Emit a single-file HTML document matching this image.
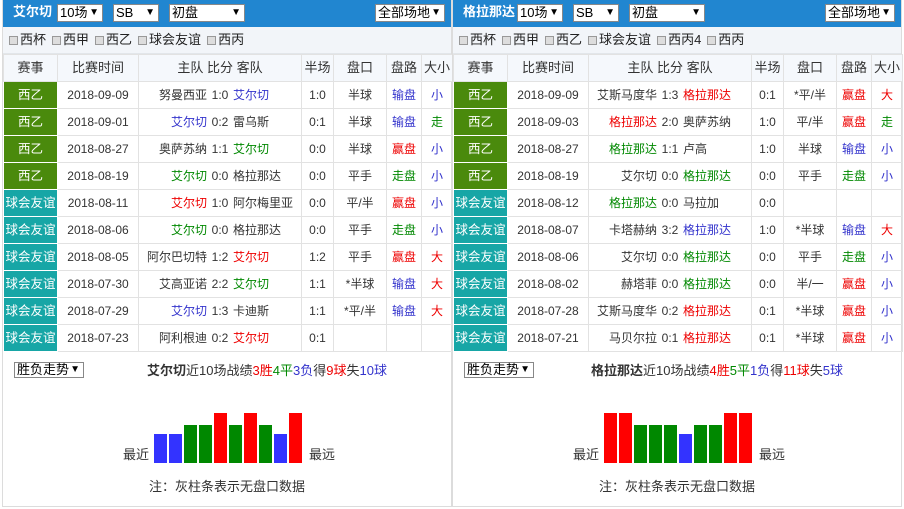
<!DOCTYPE html><html><head><meta charset="utf-8"><style>
*{margin:0;padding:0;box-sizing:border-box}
body{width:904px;height:509px;background:#fff;font-family:"Liberation Sans","Noto Sans CJK SC",sans-serif;font-size:12px;color:#333;position:relative;overflow:hidden}
.p{position:absolute;top:0;width:450px;height:507px;border:1px solid #dcdcdc;border-top:none}
.hd{height:27px;background:#2186d0;position:relative;color:#fff}
.hd b{position:absolute;left:10px;top:3px;font-size:13px;line-height:18px}
.sel{position:absolute;top:4px;height:18px;background:#fff;color:#000;border:1px solid #888;font-size:13px;line-height:16px;padding-left:2px}
.sel i{position:absolute;right:3px;top:0;font-style:normal;font-size:10px}
.ck{height:27px;background:#f2f5f9;line-height:26px;padding-left:6px;font-size:13px;color:#222;border-bottom:1px solid #e2e6ea}
.ck span{margin-right:6px}
.ck em{display:inline-block;width:9px;height:9px;border:1px solid #999;background:#ddd;margin-right:2px;vertical-align:-1px;font-style:normal}
table{border-collapse:collapse;width:449px;table-layout:fixed}
td{height:27px;border:1px solid #e2e2e2;text-align:center;font-size:12px;white-space:nowrap;overflow:hidden;vertical-align:middle;line-height:16px}
tr.h td{background:#f5f8fc;font-size:13px;color:#333}
td.lg{color:#fff;font-size:12.5px;border-color:#fff;padding:0}
.g1{background:#4a8a0c}.g2{background:#17a6a6}
.m span{display:inline-block;vertical-align:middle}
.m .a{width:62px;text-align:right}.m .s{width:26px;text-align:center}.m .b{width:62px;text-align:left}
.r{color:#e00}.g{color:#080}.bl{color:#33c}
.bot{position:relative;height:153px}
.ds{position:absolute;left:11px;top:10px;width:70px;height:16px;border:1px solid #888;font-size:13px;line-height:14px;padding-left:2px;color:#000}
.ds i{position:absolute;right:3px;font-style:normal;font-size:10px}
.sm{position:absolute;top:8px;font-size:13px;width:100%;text-align:center}
.bar{position:absolute;width:13px;bottom:42px}
.lb{position:absolute;top:92px;font-size:13px}
.nt{position:absolute;top:124px;width:100%;text-align:center;font-size:13px}
</style></head><body>

<div class="p" style="left:2px">
<div class="hd"><b>艾尔切</b>
<div class="sel" style="left:54px;width:46px">10场<i>▼</i></div>
<div class="sel" style="left:110px;width:46px">SB<i>▼</i></div>
<div class="sel" style="left:166px;width:76px">初盘<i>▼</i></div>
<div class="sel" style="left:372px;width:70px">全部场地<i>▼</i></div></div>
<div class="ck"><span><em></em>西杯</span><span><em></em>西甲</span><span><em></em>西乙</span><span><em></em>球会友谊</span><span><em></em>西丙</span></div>
<table>
<colgroup><col style="width:54px"><col style="width:81px"><col style="width:163px"><col style="width:32px"><col style="width:53px"><col style="width:35px"><col style="width:31px"></colgroup>
<tr class="h"><td>赛事</td><td>比赛时间</td><td>主队 比分 客队</td><td>半场</td><td>盘口</td><td>盘路</td><td>大小</td></tr>
<tr><td class="lg g1">西乙</td><td>2018-09-09</td><td class="m"><span class="a">努曼西亚</span><span class="s">1:0</span><span class="b bl">艾尔切</span></td><td>1:0</td><td>半球</td><td class="bl">输盘</td><td class="bl">小</td></tr>
<tr><td class="lg g1">西乙</td><td>2018-09-01</td><td class="m"><span class="a bl">艾尔切</span><span class="s">0:2</span><span class="b">雷乌斯</span></td><td>0:1</td><td>半球</td><td class="bl">输盘</td><td class="g">走</td></tr>
<tr><td class="lg g1">西乙</td><td>2018-08-27</td><td class="m"><span class="a">奥萨苏纳</span><span class="s">1:1</span><span class="b g">艾尔切</span></td><td>0:0</td><td>半球</td><td class="r">赢盘</td><td class="bl">小</td></tr>
<tr><td class="lg g1">西乙</td><td>2018-08-19</td><td class="m"><span class="a g">艾尔切</span><span class="s">0:0</span><span class="b">格拉那达</span></td><td>0:0</td><td>平手</td><td class="g">走盘</td><td class="bl">小</td></tr>
<tr><td class="lg g2">球会友谊</td><td>2018-08-11</td><td class="m"><span class="a r">艾尔切</span><span class="s">1:0</span><span class="b">阿尔梅里亚</span></td><td>0:0</td><td>平/半</td><td class="r">赢盘</td><td class="bl">小</td></tr>
<tr><td class="lg g2">球会友谊</td><td>2018-08-06</td><td class="m"><span class="a g">艾尔切</span><span class="s">0:0</span><span class="b">格拉那达</span></td><td>0:0</td><td>平手</td><td class="g">走盘</td><td class="bl">小</td></tr>
<tr><td class="lg g2">球会友谊</td><td>2018-08-05</td><td class="m"><span class="a">阿尔巴切特</span><span class="s">1:2</span><span class="b r">艾尔切</span></td><td>1:2</td><td>平手</td><td class="r">赢盘</td><td class="r">大</td></tr>
<tr><td class="lg g2">球会友谊</td><td>2018-07-30</td><td class="m"><span class="a">艾高亚诺</span><span class="s">2:2</span><span class="b g">艾尔切</span></td><td>1:1</td><td>*半球</td><td class="bl">输盘</td><td class="r">大</td></tr>
<tr><td class="lg g2">球会友谊</td><td>2018-07-29</td><td class="m"><span class="a bl">艾尔切</span><span class="s">1:3</span><span class="b">卡迪斯</span></td><td>1:1</td><td>*平/半</td><td class="bl">输盘</td><td class="r">大</td></tr>
<tr><td class="lg g2">球会友谊</td><td>2018-07-23</td><td class="m"><span class="a">阿利根迪</span><span class="s">0:2</span><span class="b r">艾尔切</span></td><td>0:1</td><td></td><td></td><td></td></tr>
</table>
<div class="bot">
<div class="ds">胜负走势<i>▼</i></div>
<div class="sm" style="left:40px"><b>艾尔切</b>近10场战绩<span class="r">3胜</span><span class="g">4平</span><span class="bl">3负</span>得<span class="r">9球</span>失<span class="bl">10球</span></div>
<div class="lb" style="left:120px">最近</div><div class="lb" style="left:306px">最远</div>
<div class="bar" style="left:151px;height:29px;background:#33f"></div>
<div class="bar" style="left:166px;height:29px;background:#33f"></div>
<div class="bar" style="left:181px;height:38px;background:#080"></div>
<div class="bar" style="left:196px;height:38px;background:#080"></div>
<div class="bar" style="left:211px;height:50px;background:#f00"></div>
<div class="bar" style="left:226px;height:38px;background:#080"></div>
<div class="bar" style="left:241px;height:50px;background:#f00"></div>
<div class="bar" style="left:256px;height:38px;background:#080"></div>
<div class="bar" style="left:271px;height:29px;background:#33f"></div>
<div class="bar" style="left:286px;height:50px;background:#f00"></div>
<div class="nt">注：灰柱条表示无盘口数据</div>
</div></div>

<div class="p" style="left:452px">
<div class="hd"><b>格拉那达</b>
<div class="sel" style="left:64px;width:46px">10场<i>▼</i></div>
<div class="sel" style="left:120px;width:46px">SB<i>▼</i></div>
<div class="sel" style="left:176px;width:76px">初盘<i>▼</i></div>
<div class="sel" style="left:372px;width:70px">全部场地<i>▼</i></div></div>
<div class="ck"><span><em></em>西杯</span><span><em></em>西甲</span><span><em></em>西乙</span><span><em></em>球会友谊</span><span><em></em>西丙4</span><span><em></em>西丙</span></div>
<table>
<colgroup><col style="width:54px"><col style="width:81px"><col style="width:163px"><col style="width:32px"><col style="width:53px"><col style="width:35px"><col style="width:31px"></colgroup>
<tr class="h"><td>赛事</td><td>比赛时间</td><td>主队 比分 客队</td><td>半场</td><td>盘口</td><td>盘路</td><td>大小</td></tr>
<tr><td class="lg g1">西乙</td><td>2018-09-09</td><td class="m"><span class="a">艾斯马度华</span><span class="s">1:3</span><span class="b r">格拉那达</span></td><td>0:1</td><td>*平/半</td><td class="r">赢盘</td><td class="r">大</td></tr>
<tr><td class="lg g1">西乙</td><td>2018-09-03</td><td class="m"><span class="a r">格拉那达</span><span class="s">2:0</span><span class="b">奥萨苏纳</span></td><td>1:0</td><td>平/半</td><td class="r">赢盘</td><td class="g">走</td></tr>
<tr><td class="lg g1">西乙</td><td>2018-08-27</td><td class="m"><span class="a g">格拉那达</span><span class="s">1:1</span><span class="b">卢高</span></td><td>1:0</td><td>半球</td><td class="bl">输盘</td><td class="bl">小</td></tr>
<tr><td class="lg g1">西乙</td><td>2018-08-19</td><td class="m"><span class="a">艾尔切</span><span class="s">0:0</span><span class="b g">格拉那达</span></td><td>0:0</td><td>平手</td><td class="g">走盘</td><td class="bl">小</td></tr>
<tr><td class="lg g2">球会友谊</td><td>2018-08-12</td><td class="m"><span class="a g">格拉那达</span><span class="s">0:0</span><span class="b">马拉加</span></td><td>0:0</td><td></td><td></td><td></td></tr>
<tr><td class="lg g2">球会友谊</td><td>2018-08-07</td><td class="m"><span class="a">卡塔赫纳</span><span class="s">3:2</span><span class="b bl">格拉那达</span></td><td>1:0</td><td>*半球</td><td class="bl">输盘</td><td class="r">大</td></tr>
<tr><td class="lg g2">球会友谊</td><td>2018-08-06</td><td class="m"><span class="a">艾尔切</span><span class="s">0:0</span><span class="b g">格拉那达</span></td><td>0:0</td><td>平手</td><td class="g">走盘</td><td class="bl">小</td></tr>
<tr><td class="lg g2">球会友谊</td><td>2018-08-02</td><td class="m"><span class="a">赫塔菲</span><span class="s">0:0</span><span class="b g">格拉那达</span></td><td>0:0</td><td>半/一</td><td class="r">赢盘</td><td class="bl">小</td></tr>
<tr><td class="lg g2">球会友谊</td><td>2018-07-28</td><td class="m"><span class="a">艾斯马度华</span><span class="s">0:2</span><span class="b r">格拉那达</span></td><td>0:1</td><td>*半球</td><td class="r">赢盘</td><td class="bl">小</td></tr>
<tr><td class="lg g2">球会友谊</td><td>2018-07-21</td><td class="m"><span class="a">马贝尔拉</span><span class="s">0:1</span><span class="b r">格拉那达</span></td><td>0:1</td><td>*半球</td><td class="r">赢盘</td><td class="bl">小</td></tr>
</table>
<div class="bot">
<div class="ds">胜负走势<i>▼</i></div>
<div class="sm" style="left:40px"><b>格拉那达</b>近10场战绩<span class="r">4胜</span><span class="g">5平</span><span class="bl">1负</span>得<span class="r">11球</span>失<span class="bl">5球</span></div>
<div class="lb" style="left:120px">最近</div><div class="lb" style="left:306px">最远</div>
<div class="bar" style="left:151px;height:50px;background:#f00"></div>
<div class="bar" style="left:166px;height:50px;background:#f00"></div>
<div class="bar" style="left:181px;height:38px;background:#080"></div>
<div class="bar" style="left:196px;height:38px;background:#080"></div>
<div class="bar" style="left:211px;height:38px;background:#080"></div>
<div class="bar" style="left:226px;height:29px;background:#33f"></div>
<div class="bar" style="left:241px;height:38px;background:#080"></div>
<div class="bar" style="left:256px;height:38px;background:#080"></div>
<div class="bar" style="left:271px;height:50px;background:#f00"></div>
<div class="bar" style="left:286px;height:50px;background:#f00"></div>
<div class="nt">注：灰柱条表示无盘口数据</div>
</div></div>
</body></html>
